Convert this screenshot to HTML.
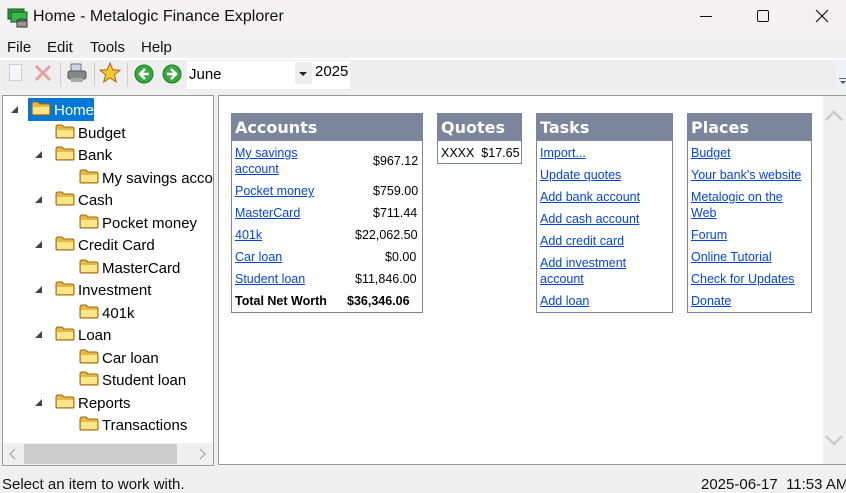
<!DOCTYPE html>
<html><head><meta charset="utf-8"><style>
*{margin:0;padding:0;box-sizing:border-box}
body{width:846px;height:492px;background:#f0f0f0;font-family:"Liberation Sans",sans-serif;position:relative;overflow:hidden}
.a{position:absolute;white-space:nowrap}
.tr{font-size:15px;color:#000;height:20px;line-height:20px}
.fd{position:absolute;width:20px;height:15px}
.tri{position:absolute;width:0;height:0;border-left:7px solid transparent;border-bottom:7px solid #444}
.box{position:absolute;background:#fff;border:1px solid #7b859c}
.hd{background:#7b859c;color:#fff;font-weight:bold;font-size:16px;height:27px;line-height:28px;padding-left:3px;font-family:"DejaVu Sans","Liberation Sans",sans-serif}
.c{font-size:12.5px;position:absolute;white-space:nowrap;line-height:16px}
.l{color:#0645d8;text-decoration:underline}
</style></head><body>
<div class="a" style="left:0;top:0;width:846px;height:34px;background:#f3f1f2"></div>
<svg class="a" style="left:7px;top:6px" width="22" height="22" viewBox="0 0 22 22"><rect x="1" y="3" width="16" height="10" fill="#2c9a3a" stroke="#145a1e"/><rect x="4" y="6" width="16" height="10" fill="#39b54a" stroke="#145a1e"/><ellipse cx="15" cy="15" rx="5" ry="2" fill="#888" stroke="#333"/><rect x="10" y="15" width="10" height="6" fill="#999" stroke="#333"/></svg>
<div class="a" style="left:33px;top:8px;font-size:16px;color:#111">Home - Metalogic Finance Explorer</div>
<div class="a" style="left:700px;top:16px;width:12px;height:1px;background:#111"></div>
<div class="a" style="left:757px;top:10px;width:12px;height:12px;border:1px solid #111;border-radius:2px"></div>
<svg class="a" style="left:815px;top:9px" width="14" height="14"><path d="M1 1L13 13M13 1L1 13" stroke="#111" stroke-width="1.2"/></svg>
<div class="a" style="left:7px;top:39px;font-size:15px;color:#111">File</div>
<div class="a" style="left:47px;top:39px;font-size:15px;color:#111">Edit</div>
<div class="a" style="left:90px;top:39px;font-size:15px;color:#111">Tools</div>
<div class="a" style="left:141px;top:39px;font-size:15px;color:#111">Help</div>
<div class="a" style="left:0;top:58px;width:846px;height:2px;background:#fff"></div>
<div class="a" style="left:2px;top:60px;width:834px;height:30px;background:#eee"></div>
<div class="a" style="left:9px;top:64px;width:13px;height:17px;border:1px solid #c8d0dc;background:#f4f6fa"></div>
<svg class="a" style="left:34px;top:64px" width="18" height="18"><path d="M2 2L16 16M16 2L2 16" stroke="#e8a0a0" stroke-width="3"/></svg>
<div class="a" style="left:60px;top:62px;width:1px;height:24px;background:#ccc"></div>
<svg class="a" style="left:66px;top:62px" width="22" height="22"><rect x="5" y="2" width="10" height="8" fill="#c8d4e8" stroke="#777"/><rect x="2" y="9" width="18" height="8" rx="2" fill="#888" stroke="#555"/><rect x="5" y="16" width="12" height="4" fill="#aaa"/></svg>
<div class="a" style="left:94px;top:62px;width:1px;height:24px;background:#ccc"></div>
<svg class="a" style="left:99px;top:62px" width="22" height="22"><path d="M11 1L13.8 7.8 21 8.2 15.4 12.8 17.3 20 11 16 4.7 20 6.6 12.8 1 8.2 8.2 7.8Z" fill="#f8c830" stroke="#a86a10"/></svg>
<div class="a" style="left:127px;top:62px;width:1px;height:24px;background:#ccc"></div>
<svg class="a" style="left:134px;top:64px" width="20" height="20"><circle cx="10" cy="10" r="9" fill="#3aa840" stroke="#1d7a23"/><path d="M11 5L6 10 11 15M6 10H15" stroke="#fff" stroke-width="2.5" fill="none"/></svg>
<svg class="a" style="left:162px;top:64px" width="20" height="20"><circle cx="10" cy="10" r="9" fill="#3aa840" stroke="#1d7a23"/><path d="M9 5L14 10 9 15M14 10H5" stroke="#fff" stroke-width="2.5" fill="none"/></svg>
<div class="a" style="left:187px;top:61px;width:126px;height:28px;background:#fff"></div>
<div class="a" style="left:189px;top:66px;font-size:15px">June</div>
<div class="a" style="left:295px;top:62px;width:17px;height:22px;background:#eee"></div>
<div class="a" style="left:299px;top:72px;border-left:4px solid transparent;border-right:4px solid transparent;border-top:4px solid #222"></div>
<div class="a" style="left:313px;top:61px;width:37px;height:28px;background:#fff"></div>
<div class="a" style="left:315px;top:63px;font-size:15px">2025</div>
<div class="a" style="left:836px;top:60px;width:10px;height:30px;background:#eef3fb"></div>
<div class="a" style="left:839px;top:78px;width:7px;height:1px;background:#666"></div>
<div class="a" style="left:840px;top:81px;border-left:3px solid transparent;border-right:3px solid transparent;border-top:3px solid #555"></div>
<div class="a" style="left:2px;top:95px;width:212px;height:371px;background:#fff;border:1px solid #999"></div>
<div class="a" style="left:3px;top:443px;width:210px;height:22px;background:#f0f0f0"></div>
<div class="a" style="left:24px;top:444px;width:153px;height:20px;background:#cdcdcd"></div>
<svg class="a" style="left:9px;top:448px" width="8" height="12"><path d="M6 1L1 6 6 11" stroke="#999" fill="none"/></svg>
<svg class="a" style="left:198px;top:448px" width="8" height="12"><path d="M2 1L7 6 2 11" stroke="#999" fill="none"/></svg>
<div class="a" style="left:28px;top:98px;width:66px;height:23px;background:#0078d7"></div>
<div id="tree"></div>
<div class="a" style="left:218px;top:95px;width:628px;height:370px;background:#fff;border:1px solid #999;border-right:none"></div>
<div class="a" style="left:823px;top:96px;width:23px;height:368px;background:#f0f0f0"></div>
<svg class="a" style="left:825px;top:110px" width="18" height="12"><path d="M1 10L9 2 17 10" stroke="#ccc" stroke-width="2.5" fill="none"/></svg>
<svg class="a" style="left:825px;top:434px" width="18" height="12"><path d="M1 2L9 10 17 2" stroke="#ccc" stroke-width="2.5" fill="none"/></svg>

<div class="box" style="left:231px;top:113px;width:192px;height:200px"><div class="hd">Accounts</div></div>
<div class="c l" style="left:235px;top:145px">My savings<br>account</div><div class="c" style="left:373px;top:153px">$967.12</div>
<div class="c l" style="left:235px;top:183px">Pocket money</div><div class="c" style="left:373px;top:183px">$759.00</div>
<div class="c l" style="left:235px;top:205px">MasterCard</div><div class="c" style="left:373px;top:205px">$711.44</div>
<div class="c l" style="left:235px;top:227px">401k</div><div class="c" style="left:355px;top:227px">$22,062.50</div>
<div class="c l" style="left:235px;top:249px">Car loan</div><div class="c" style="left:385px;top:249px">$0.00</div>
<div class="c l" style="left:235px;top:271px">Student loan</div><div class="c" style="left:355px;top:271px">$11,846.00</div>
<div class="c" style="left:235px;top:293px;font-weight:bold">Total Net Worth</div><div class="c" style="left:347px;top:293px;font-weight:bold">$36,346.06</div>

<div class="box" style="left:437px;top:113px;width:85px;height:51px"><div class="hd">Quotes</div></div>
<div class="c" style="left:441px;top:145px">XXXX&nbsp; $17.65</div>

<div class="box" style="left:536px;top:113px;width:137px;height:200px"><div class="hd">Tasks</div></div>
<div class="c l" style="left:540px;top:145px">Import...</div>
<div class="c l" style="left:540px;top:167px">Update quotes</div>
<div class="c l" style="left:540px;top:189px">Add bank account</div>
<div class="c l" style="left:540px;top:211px">Add cash account</div>
<div class="c l" style="left:540px;top:233px">Add credit card</div>
<div class="c l" style="left:540px;top:255px">Add investment<br>account</div>
<div class="c l" style="left:540px;top:293px">Add loan</div>

<div class="box" style="left:687px;top:113px;width:125px;height:200px"><div class="hd">Places</div></div>
<div class="c l" style="left:691px;top:145px">Budget</div>
<div class="c l" style="left:691px;top:167px">Your bank's website</div>
<div class="c l" style="left:691px;top:189px">Metalogic on the<br>Web</div>
<div class="c l" style="left:691px;top:227px">Forum</div>
<div class="c l" style="left:691px;top:249px">Online Tutorial</div>
<div class="c l" style="left:691px;top:271px">Check for Updates</div>
<div class="c l" style="left:691px;top:293px">Donate</div>

<div class="a" style="left:2px;top:476px;font-size:15px;color:#111">Select an item to work with.</div>
<div class="a" style="left:701px;top:476px;font-size:15px;color:#111">2025-06-17&nbsp; 11:53 AM</div>

<script>
var items=[[0,1,"Home"],[1,0,"Budget"],[1,1,"Bank"],[2,0,"My savings account"],[1,1,"Cash"],[2,0,"Pocket money"],[1,1,"Credit Card"],[2,0,"MasterCard"],[1,1,"Investment"],[2,0,"401k"],[1,1,"Loan"],[2,0,"Car loan"],[2,0,"Student loan"],[1,1,"Reports"],[2,0,"Transactions"]];
var h="";
items.forEach(function(it,i){
 var y=100+i*22.5, x=31+it[0]*24;
 if(it[1]) h+='<div class="tri" style="left:'+(x-20)+'px;top:'+(y+6)+'px"></div>';
 h+='<svg class="fd" style="left:'+x+'px;top:'+(y+1)+'px" viewBox="0 0 20 15"><path d="M1 3Q1 1 3 1H7L9 3H17Q19 3 19 5V13Q19 14 18 14H2Q1 14 1 13Z" fill="#e8b844" stroke="#9a6a10"/><path d="M2 6H18V13H2Z" fill="#fde68a"/></svg>';
 h+='<div class="a tr" style="left:'+(x+23)+'px;top:'+(y+1)+'px;'+(i==0?'color:#fff':'')+'">'+it[2]+'</div>';
});
document.getElementById('tree').innerHTML=h;
</script>
<div class="a" style="left:214px;top:95px;width:4px;height:372px;background:#f0f0f0"></div>
</body></html>
